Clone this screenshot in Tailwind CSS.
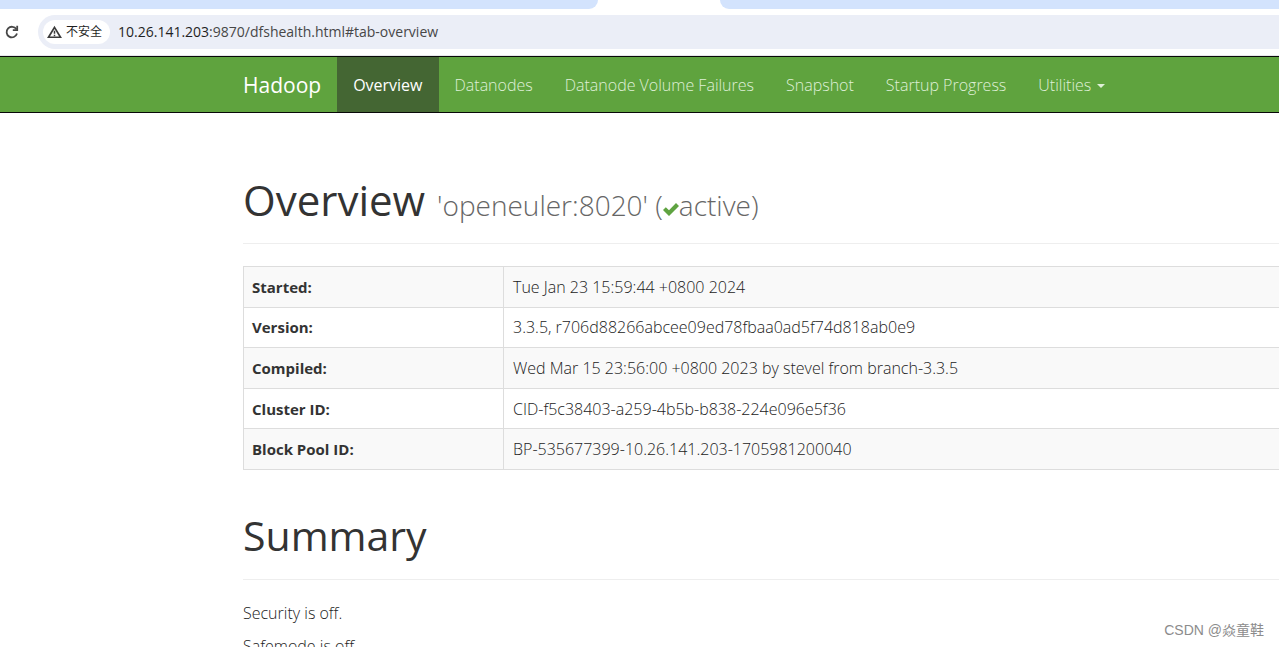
<!DOCTYPE html>
<html lang="en">
<head>
<meta charset="utf-8">
<title>Namenode information</title>
<meta name="viewport" content="width=device-width, initial-scale=1">
<script src="https://cdn.jsdelivr.net/npm/@tailwindcss/browser@4"></script>
</head>
<body class="relative h-screen overflow-hidden bg-white font-['Open_Sans','Noto_Sans_CJK_SC',sans-serif] text-[#333333]">
  <div>
    <div class="flex h-[9px] justify-between">
      <div class="w-[598px] rounded-br-xl bg-[#d3e3fd]"></div>
      <div class="ml-[122px] flex-1 rounded-bl-xl bg-[#d3e3fd]"></div>
    </div>
    <div class="flex h-[47px] items-start border-b border-[#e6e8ea] pt-[6px]">
      <button type="button" aria-label="Reload" class="mt-[9px] mr-[18px] ml-1 size-4 shrink-0">
        <svg viewBox="0 0 16 16" class="size-4" fill="none" stroke="#474747" stroke-width="1.8"><path d="M12.4 5.2A5.3 5.3 0 1 0 13 9.6"/><path d="M13.2 1.8v4.4H8.8"/></svg>
      </button>
      <div class="flex h-[34px] min-w-0 flex-1 items-center rounded-l-full bg-[#ebeef7] pl-[5px]">
        <button type="button" class="flex h-6 shrink-0 items-center gap-1 rounded-full bg-white pr-2 pl-1 text-[#1f1f1f]">
          <svg viewBox="0 0 16 14" class="h-[14px] w-[15px]" fill="none" stroke="#3c3c3c" stroke-width="1.8"><path d="M8 2L14.4 12.6H1.6Z"/><path d="M8 5.6v3.2M8 9.8v1.6" stroke-width="1.6"/></svg>
          <span class="text-[12px] leading-4">不安全</span>
        </button>
        <div class="ml-2 text-[14px] leading-5 whitespace-nowrap text-[#474747]"><span class="text-[#1f1f1f]">10.26.141.203</span>:9870/dfshealth.html#tab-overview</div>
      </div>
    </div>
  </div>

  <nav class="flex h-[57px] border-y border-[#080808] bg-[#5fa33e] pl-[243px] text-[16px] leading-6 whitespace-nowrap text-[#dff0d8]">
    <a href="#" class="flex items-center pr-4 text-[21px] text-white">Hadoop</a>
    <a href="#tab-overview" class="flex items-center bg-[#446633] px-4 text-white">Overview</a>
    <a href="#tab-datanode" class="flex items-center px-4 font-light">Datanodes</a>
    <a href="#tab-datanode-volume-failures" class="flex items-center px-4 font-light">Datanode Volume Failures</a>
    <a href="#tab-snapshot" class="flex items-center px-4 font-light">Snapshot</a>
    <a href="#tab-startup-progress" class="flex items-center px-4 font-light">Startup Progress</a>
    <button type="button" class="flex items-center gap-[6px] px-4 font-light">Utilities
      <svg viewBox="0 0 8 4" class="mt-[3px] h-1 w-2" fill="#dff0d8"><path d="M0 0h8L4 4z"/></svg>
    </button>
  </nav>

  <main class="pl-[243px]">
    <h1 class="flex h-[131px] items-baseline border-b border-[#eeeeee] pt-[59px] text-[42px] leading-[56px] whitespace-nowrap">Overview
      <small class="ml-3 text-[28px] font-light text-[#666666]">'openeuler:8020' (<svg viewBox="0 0 16 13" class="inline-block h-[13px] w-4 align-baseline" fill="#5fa341"><path d="M0 7L2.8 4.2L6 7.2L13 0L16 3L6 13Z"/></svg>active)</small>
    </h1>
    <table class="mt-[22px] h-[204px] w-full border-collapse border-y border-l border-[#dddddd] text-left text-[15px] leading-5">
      <tbody>
        <tr class="border-b border-[#dddddd] bg-[#f9f9f9]"><th scope="row" class="w-[260px] border-r border-[#dddddd] px-2 font-bold">Started:</th><td class="px-[9px] text-[16px] font-light text-[#222222]">Tue Jan 23 15:59:44 +0800 2024</td></tr>
        <tr class="border-b border-[#dddddd]"><th scope="row" class="border-r border-[#dddddd] px-2 font-bold">Version:</th><td class="px-[9px] text-[16px] font-light text-[#222222]">3.3.5, r706d88266abcee09ed78fbaa0ad5f74d818ab0e9</td></tr>
        <tr class="border-b border-[#dddddd] bg-[#f9f9f9]"><th scope="row" class="border-r border-[#dddddd] px-2 font-bold">Compiled:</th><td class="px-[9px] text-[16px] font-light text-[#222222]">Wed Mar 15 23:56:00 +0800 2023 by stevel from branch-3.3.5</td></tr>
        <tr class="border-b border-[#dddddd]"><th scope="row" class="border-r border-[#dddddd] px-2 font-bold">Cluster ID:</th><td class="px-[9px] text-[16px] font-light text-[#222222]">CID-f5c38403-a259-4b5b-b838-224e096e5f36</td></tr>
        <tr class="bg-[#f9f9f9]"><th scope="row" class="border-r border-[#dddddd] px-2 font-bold">Block Pool ID:</th><td class="px-[9px] text-[16px] font-light text-[#222222]">BP-535677399-10.26.141.203-1705981200040</td></tr>
      </tbody>
    </table>
    <h1 class="h-[110px] border-b border-[#eeeeee] pt-[37px] text-[41px] leading-[56px]">Summary</h1>
    <p class="mt-[22px] text-[16px] leading-[22px] font-light text-[#222222]">Security is off.</p>
    <p class="mt-[11px] text-[16px] leading-[22px] font-light text-[#222222]">Safemode is off.</p>
  </main>

  <div class="absolute right-[15px] bottom-[7px] font-['Liberation_Sans','Noto_Sans_CJK_SC',sans-serif] text-[14px] leading-5 text-[#8c8c8c]">CSDN @焱童鞋</div>
</body>
</html>
